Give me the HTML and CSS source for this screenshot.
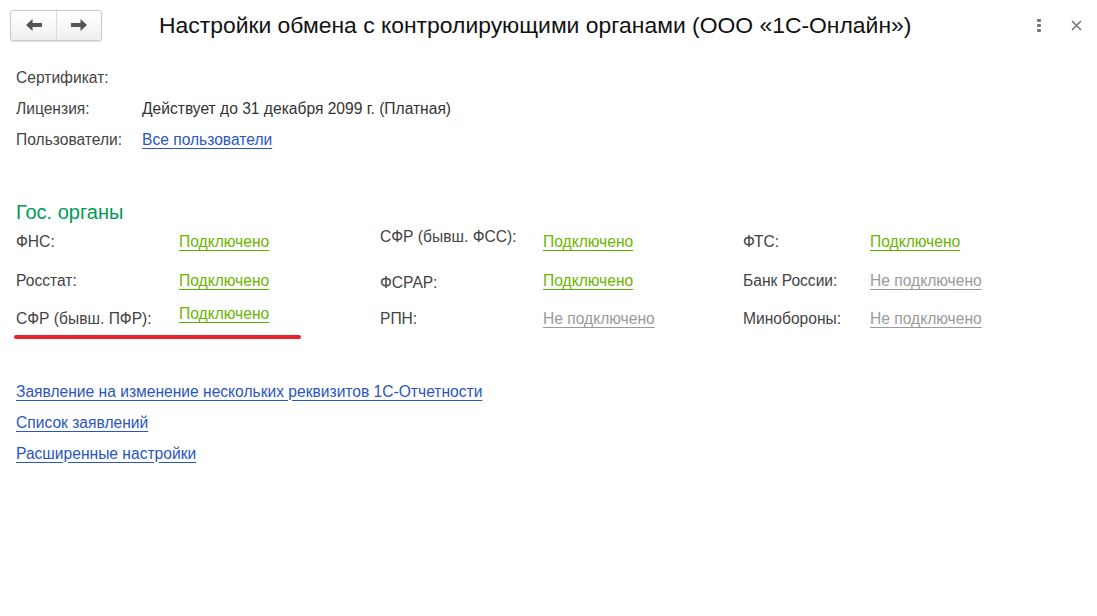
FILE: index.html
```html
<!DOCTYPE html>
<html lang="ru">
<head>
<meta charset="utf-8">
<title>Настройки обмена</title>
<link rel="stylesheet" href="styles.css">
</head>
<body>
<div class="window">
  <header class="header">
    <div class="nav">
      <button class="nav-btn" aria-label="Назад">
        <svg width="18" height="14" viewBox="0 0 18 14"><path d="M1 7 L7.5 1 L7.5 5 L17 5 L17 9 L7.5 9 L7.5 13 Z" fill="#555"/></svg>
      </button>
      <button class="nav-btn" aria-label="Вперёд">
        <svg width="18" height="14" viewBox="0 0 18 14"><path d="M17 7 L10.5 1 L10.5 5 L1 5 L1 9 L10.5 9 L10.5 13 Z" fill="#555"/></svg>
      </button>
    </div>
    <h1 class="title">Настройки обмена с контролирующими органами (ООО «1С-Онлайн»)</h1>
    <div class="tools">
      <span class="tool kebab"><i></i><i></i><i></i></span>
      <span class="tool close">
        <svg width="11" height="11" viewBox="0 0 11 11"><path d="M1 1 L10 10 M10 1 L1 10" stroke="#777" stroke-width="1.6"/></svg>
      </span>
    </div>
  </header>

  <section class="info">
    <div class="info-row r1"><span class="label">Сертификат:</span><span class="value"></span></div>
    <div class="info-row r2"><span class="label">Лицензия:</span><span class="value">Действует до 31 декабря 2099 г. (Платная)</span></div>
    <div class="info-row r3"><span class="label">Пользователи:</span><a class="value link" href="#">Все пользователи</a></div>
  </section>

  <h2 class="group-title">Гос. органы</h2>

  <section class="agencies">
    <span class="label">ФНС:</span><a class="status on" href="#">Подключено</a>
    <span class="label up">СФР (бывш. ФСС):</span><a class="status on" href="#">Подключено</a>
    <span class="label">ФТС:</span><a class="status on" href="#">Подключено</a>

    <span class="label">Росстат:</span><a class="status on" href="#">Подключено</a>
    <span class="label down">ФСРАР:</span><a class="status on" href="#">Подключено</a>
    <span class="label">Банк России:</span><a class="status off" href="#">Не подключено</a>

    <span class="label">СФР (бывш. ПФР):</span><a class="status on up" href="#">Подключено</a>
    <span class="label">РПН:</span><a class="status off" href="#">Не подключено</a>
    <span class="label">Минобороны:</span><a class="status off" href="#">Не подключено</a>
  </section>
  <div class="red-mark"></div>

  <nav class="links">
    <a class="link" href="#">Заявление на изменение нескольких реквизитов 1С-Отчетности</a>
    <a class="link" href="#">Список заявлений</a>
    <a class="link" href="#">Расширенные настройки</a>
  </nav>
</div>
</body>
</html>
```

FILE: styles.css
```css
* { box-sizing: border-box; }
html, body { margin: 0; padding: 0; background: #fff; }
body {
  font-family: "Liberation Sans", Arial, sans-serif;
  font-size: 15.6px;
  color: #333;
}
.window { width: 1097px; height: 616px; }

.header {
  display: flex;
  align-items: center;
  height: 50px;
  padding: 10px 0 10px 10px;
}
.nav {
  display: flex;
  height: 31px;
  border: 1px solid #c8c8c8;
  border-radius: 3px;
  background: linear-gradient(#ffffff, #f0f0f0);
  box-shadow: 0 1px 1px rgba(0,0,0,0.12);
}
.nav-btn {
  width: 45px;
  height: 29px;
  border: 0;
  padding: 0;
  background: transparent;
  display: flex;
  align-items: center;
  justify-content: center;
}
.nav-btn + .nav-btn { border-left: 1px solid #dcdcdc; }
.title {
  margin: 0 0 0 57px;
  font-size: 22.9px;
  font-weight: normal;
  color: #111;
  line-height: 30px;
  flex: 1;
  white-space: nowrap;
}
.tools {
  display: flex;
  align-items: center;
  gap: 30px;
  margin-right: 15px;
}
.kebab {
  display: flex;
  flex-direction: column;
  gap: 2px;
  width: 4px;
}
.kebab i {
  display: block;
  width: 4px;
  height: 3px;
  background: #777;
  border-radius: 1px;
}
.close { display: flex; }

.info {
  padding: 13px 0 0 16px;
}
.info-row {
  display: flex;
  align-items: center;
}
.info-row.r1 { height: 30px; }
.info-row.r2 { height: 31px; }
.info-row.r3 { height: 32px; }
.info .label { width: 126px; color: #444; }
.link {
  color: #2a56be;
  text-decoration: underline;
  text-underline-offset: 3px;
}

.group-title {
  margin: 45px 0 0 16px;
  font-size: 20px;
  font-weight: normal;
  color: #009a5a;
  line-height: 22px;
}

.agencies {
  display: grid;
  grid-template-columns: 163px 201px 163px 200px 127px auto;
  grid-auto-rows: 38.5px;
  align-items: center;
  padding-left: 16px;
  margin-top: 0;
}
.agencies .label { color: #444; }
.agencies .up { position: relative; top: -5px; }
.agencies .down { position: relative; top: 2px; }
.status {
  justify-self: start;
  text-decoration: underline;
  text-underline-offset: 3px;
}
.status.on { color: #6cb400; text-decoration-color: #5caf00; }
.status.off { color: #9a9a9a; text-decoration-color: #999; }

.red-mark {
  width: 287px;
  height: 4px;
  margin: -4px 0 0 14px;
  background: #e8202a;
  border-radius: 2px;
}

.links {
  display: flex;
  flex-direction: column;
  gap: 11px;
  padding: 43px 0 0 16px;
}
.links .link { align-self: flex-start; line-height: 20px; }
```
